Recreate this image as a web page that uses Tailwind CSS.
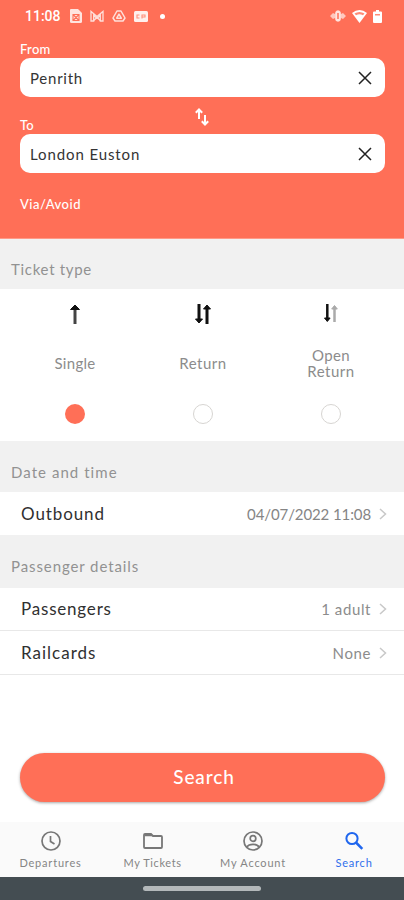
<!DOCTYPE html>
<html lang="en">
<head>
<meta charset="utf-8">
<title>Ticket search</title>
<script src="https://cdn.jsdelivr.net/npm/@tailwindcss/browser@4"></script>
</head>
<body class="w-[404px] h-[900px] overflow-hidden bg-white font-[Lato,sans-serif] flex flex-col whitespace-nowrap">
<header class="h-[239px] shrink-0 bg-[#ff6f57] text-white flex flex-col border-b border-[#ff9a88]">
  <div class="h-8 shrink-0 flex items-center pl-[25px] pr-[22px]">
    <span class="w-[45px] font-[Roboto,sans-serif] font-medium text-[14px] leading-8">11:08</span>
    <svg class="w-3 h-[14px]" viewBox="0 0 12 14"><path d="M1 0h7l4 4v8.500q0 1.500-1.500 1.500h-9Q0 14 0 12.500V1q0-1 1-1z" fill="#ffe4df"/><path d="M3 5.500h6v6H3zM3 5.500l6 6M9 5.500l-6 6" fill="none" stroke="#ff6f57" stroke-width="1.100"/></svg>
    <svg class="w-[14px] h-3 ml-2" viewBox="0 0 14 12" fill="none" stroke="#ffe0da" stroke-width="1.300"><path d="M1 11V1.500L7 6.500l6-5V11h-2.700V5.500L7 8.300 3.700 5.500V11z"/><path d="M3.700 10.500L7 7.500l3.300 3"/></svg>
    <svg class="w-[14px] h-3 ml-2" viewBox="0 0 14 12" fill="none" stroke="#ffe0da" stroke-width="1.500" stroke-linejoin="round"><path d="M5 1h4l4 7-2 3H3L1 8zM7 4.200L4.700 8.200h4.600z"/></svg>
    <svg class="w-[14px] h-[11px] ml-2" viewBox="0 0 14 11"><rect width="14" height="11" rx="1.500" fill="#fff0ed"/><path d="M5.500 4H3v3h2.500M8 7.500V4h3v2H8" fill="none" stroke="#ff8f7b" stroke-width="1.100"/></svg>
    <i class="w-[5px] h-[5px] rounded-full bg-white ml-3"></i>
    <span class="grow"></span>
    <svg class="w-4 h-3" viewBox="0 0 16 12"><path d="M0 6l3-3 2 1 1-3 2-1 2 1 1 3 2-1 3 3-3 3-2-1-1 3-2 1-2-1-1-3-2 1z" fill="#ffc8be"/><rect x="5.500" y="1" width="5" height="10" rx="1.500" fill="#ffe5e0"/><path d="M8 3v6" stroke="#ff6f57" stroke-width="1.500"/></svg>
    <svg class="w-[15px] h-[13px] ml-[6px]" viewBox="0 0 15 13"><path d="M0 3q7.500-6 15 0L7.500 13z" fill="#fff"/><path d="M2.500 3.600q5-3.200 10 0L11 5.300q-3.500-2-7 0z" fill="#ff8b77"/></svg>
    <svg class="w-[9px] h-[13px] ml-[6px]" viewBox="0 0 9 13"><path d="M3 0h3v1.500h2q1 0 1 1V12q0 1-1 1H1q-1 0-1-1V2.500q0-1 1-1h2z" fill="#fff"/><path d="M2 4h5v1.500H2z" fill="#ff8b77"/></svg>
  </div>
  <div class="pl-5 pr-[19px] pt-[10px] flex flex-col">
    <label class="h-4 leading-[15px] text-[13px] font-medium"><span class="tracking-[.3px]">From</span></label>
    <div class="h-[39px] bg-white rounded-[10px] flex items-center justify-between pl-[10px] pr-[13px] pt-px text-[#343434] text-[15px]">
      <span class="tracking-[.75px]">Penrith</span>
      <svg class="w-[14px] h-[14px] -mt-px" viewBox="0 0 14 14"><path d="M1 1l12 12M13 1L1 13" stroke="#222" stroke-width="1.500"/></svg>
    </div>
    <div class="h-[37px] grid grid-cols-3">
      <label class="self-end h-[17px] leading-[17px] text-[13px] font-medium"><span>To</span></label>
      <svg class="w-[14px] h-[18px] mt-[11px] justify-self-center" viewBox="0 0 14 18" fill="none" stroke="#fff" stroke-width="2"><path d="M4 11V2M.800 4.800L4 1.500l3.200 3.300M10 7v9M6.800 13.200l3.200 3.300 3.200-3.300"/></svg>
    </div>
    <div class="h-[39px] bg-white rounded-[10px] flex items-center justify-between pl-[10px] pr-[13px] pt-px text-[#343434] text-[15px]">
      <span class="tracking-[.9px]">London Euston</span>
      <svg class="w-[14px] h-[14px] -mt-px" viewBox="0 0 14 14"><path d="M1 1l12 12M13 1L1 13" stroke="#222" stroke-width="1.500"/></svg>
    </div>
    <div class="mt-[23px] h-4 leading-4 text-[13px] font-medium"><span class="tracking-[.5px]">Via/Avoid</span></div>
  </div>
</header>
<main class="grow flex flex-col">
  <h2 class="h-[50px] bg-[#f1f1f1] pl-[11px] pt-[10px] leading-10 text-[15px] text-[#929292]"><span class="tracking-[.7px]">Ticket type</span></h2>
  <section class="h-[152px] pl-[11px] pr-[9px] grid grid-cols-3 text-[15px] text-[#8c8c8c]">
    <div class="flex flex-col items-center pt-[15px]">
      <svg class="w-5 h-5" viewBox="0 0 20 20" fill="none"><path d="M10 20V3" stroke-width="3" stroke="#444"/><path d="M5.500 5.500L10 1l4.500 4.500z" fill="#111" stroke="#111"/></svg>
      <div class="h-[50px] mt-[14px] flex items-center"><span class="tracking-[.3px]">Single</span></div>
      <i class="mt-4 w-5 h-5 rounded-full bg-[#ff6f57]"></i>
    </div>
    <div class="flex flex-col items-center pt-[15px]">
      <svg class="w-5 h-5" viewBox="0 0 20 20" stroke="#111" fill="#111"><path d="M6 0v17M14 20V3" stroke-width="3"/><path d="M2.500 15L6 19l3.500-4zM10.500 5L14 1l3.500 4z"/></svg>
      <div class="h-[50px] mt-[14px] flex items-center"><span class="tracking-[.5px]">Return</span></div>
      <i class="mt-4 w-5 h-5 rounded-full border-[1.5px] border-[#d7d5d2]"></i>
    </div>
    <div class="flex flex-col items-center pt-[15px]">
      <svg class="w-5 h-5" viewBox="0 0 20 20"><path d="M6.300 0v16" stroke="#111" stroke-width="2.500"/><path d="M3.500 14l2.800 3.500L9.100 14z" fill="#111" stroke="#111"/><path d="M13.500 18V3" stroke="#aaa" stroke-width="2.500"/><path d="M10.700 5l2.800-3.500L16.300 5z" fill="#aaa" stroke="#aaa"/></svg>
      <div class="h-[50px] mt-[14px] flex flex-col items-center justify-center leading-4"><span class="tracking-[.4px]">Open</span><span class="tracking-[.5px]">Return</span></div>
      <i class="mt-4 w-5 h-5 rounded-full border-[1.5px] border-[#d7d5d2]"></i>
    </div>
  </section>
  <h2 class="h-[51px] bg-[#f1f1f1] pl-[11px] pt-[11px] leading-10 text-[15px] text-[#929292]"><span class="tracking-[1.050px]">Date and time</span></h2>
  <div class="h-[43px] flex items-center pl-[21px] pr-[17px] pt-px text-[15px] text-[#858585]">
    <span class="text-[17px] text-[#303030] tracking-[.9px]">Outbound</span>
    <span class="ml-auto tracking-[-.1px]">04/07/2022 11:08</span>
    <svg class="w-2 h-3 ml-2" viewBox="0 0 8 12"><path d="M1 1l5.500 5L1 11" fill="none" stroke="#c8c8c8" stroke-width="1.500"/></svg>
  </div>
  <h2 class="h-[53px] bg-[#f1f1f1] pl-[11px] pt-[11px] leading-10 text-[15px] text-[#929292]"><span class="tracking-[.9px]">Passenger details</span></h2>
  <div class="h-[43px] border-b border-[#e8e8e8] flex items-center pl-[21px] pr-[17px] text-[15px] text-[#8c8c8c]">
    <span class="text-[17px] text-[#303030] tracking-[.8px]">Passengers</span>
    <span class="ml-auto tracking-[.6px]">1 adult</span>
    <svg class="w-2 h-3 ml-2" viewBox="0 0 8 12"><path d="M1 1l5.500 5L1 11" fill="none" stroke="#c8c8c8" stroke-width="1.500"/></svg>
  </div>
  <div class="h-[44px] border-b border-[#e8e8e8] flex items-center pl-[21px] pr-[17px] pt-px text-[15px] text-[#8c8c8c]">
    <span class="text-[17px] text-[#303030] tracking-[1px]">Railcards</span>
    <span class="ml-auto tracking-[.6px]">None</span>
    <svg class="w-2 h-3 ml-2" viewBox="0 0 8 12"><path d="M1 1l5.500 5L1 11" fill="none" stroke="#c8c8c8" stroke-width="1.500"/></svg>
  </div>
  <button class="mt-[78px] mx-5 w-[365px] h-[49px] rounded-full bg-[#ff6f57] shadow-[0_1px_3px_rgba(0,0,0,0.35)] text-white text-[19px] font-medium pl-[3px]"><span class="tracking-[.9px]">Search</span></button>
</main>
<nav class="h-[55px] shrink-0 bg-[#fafafa] grid grid-cols-4 text-[11px] text-[#858585]">
  <div class="flex flex-col items-center pt-[9px]">
    <svg class="w-5 h-5" viewBox="0 0 20 20" fill="none" stroke="#777" stroke-width="1.700"><circle cx="10" cy="10" r="9"/><path d="M9.500 5v5.500l4 2.500"/></svg>
    <span class="leading-[14px] mt-[5px] tracking-[.8px]">Departures</span>
  </div>
  <div class="flex flex-col items-center pt-[9px] pl-[2px]">
    <svg class="w-5 h-5" viewBox="0 0 20 20"><path d="M1 4v12q0 1 1 1h16q1 0 1-1V6q0-1-1-1H10L8 3H2Q1 3 1 4z" fill="none" stroke="#777" stroke-width="1.800"/><path d="M1.500 3h6.200l2 2.200H1.500z" fill="#777"/></svg>
    <span class="leading-[14px] mt-[5px] tracking-[.6px]">My Tickets</span>
  </div>
  <div class="flex flex-col items-center pt-[9px] pl-px">
    <svg class="w-5 h-5" viewBox="0 0 20 20" fill="none" stroke="#777" stroke-width="1.700"><circle cx="10" cy="10" r="9"/><circle cx="10" cy="7.500" r="2.800"/><path d="M4 16q1.500-2.700 6-2.700t6 2.700"/></svg>
    <span class="leading-[14px] mt-[5px] tracking-[.8px]">My Account</span>
  </div>
  <div class="flex flex-col items-center pt-[9px] pl-px text-[#2f6fec]">
    <svg class="w-5 h-5" viewBox="0 0 20 20" fill="none" stroke="#1f66ee"><circle cx="8" cy="7.500" r="5.600" stroke-width="2"/><path d="M12 11.500l6.300 6.300" stroke-width="2.500"/></svg>
    <span class="leading-[14px] mt-[5px] tracking-[.8px]">Search</span>
  </div>
</nav>
<footer class="h-[23px] shrink-0 bg-[#444d52] flex justify-center pt-[9px]"><i class="w-[118px] h-[5px] rounded-full bg-[#b3b8ba]"></i></footer>
</body>
</html>
